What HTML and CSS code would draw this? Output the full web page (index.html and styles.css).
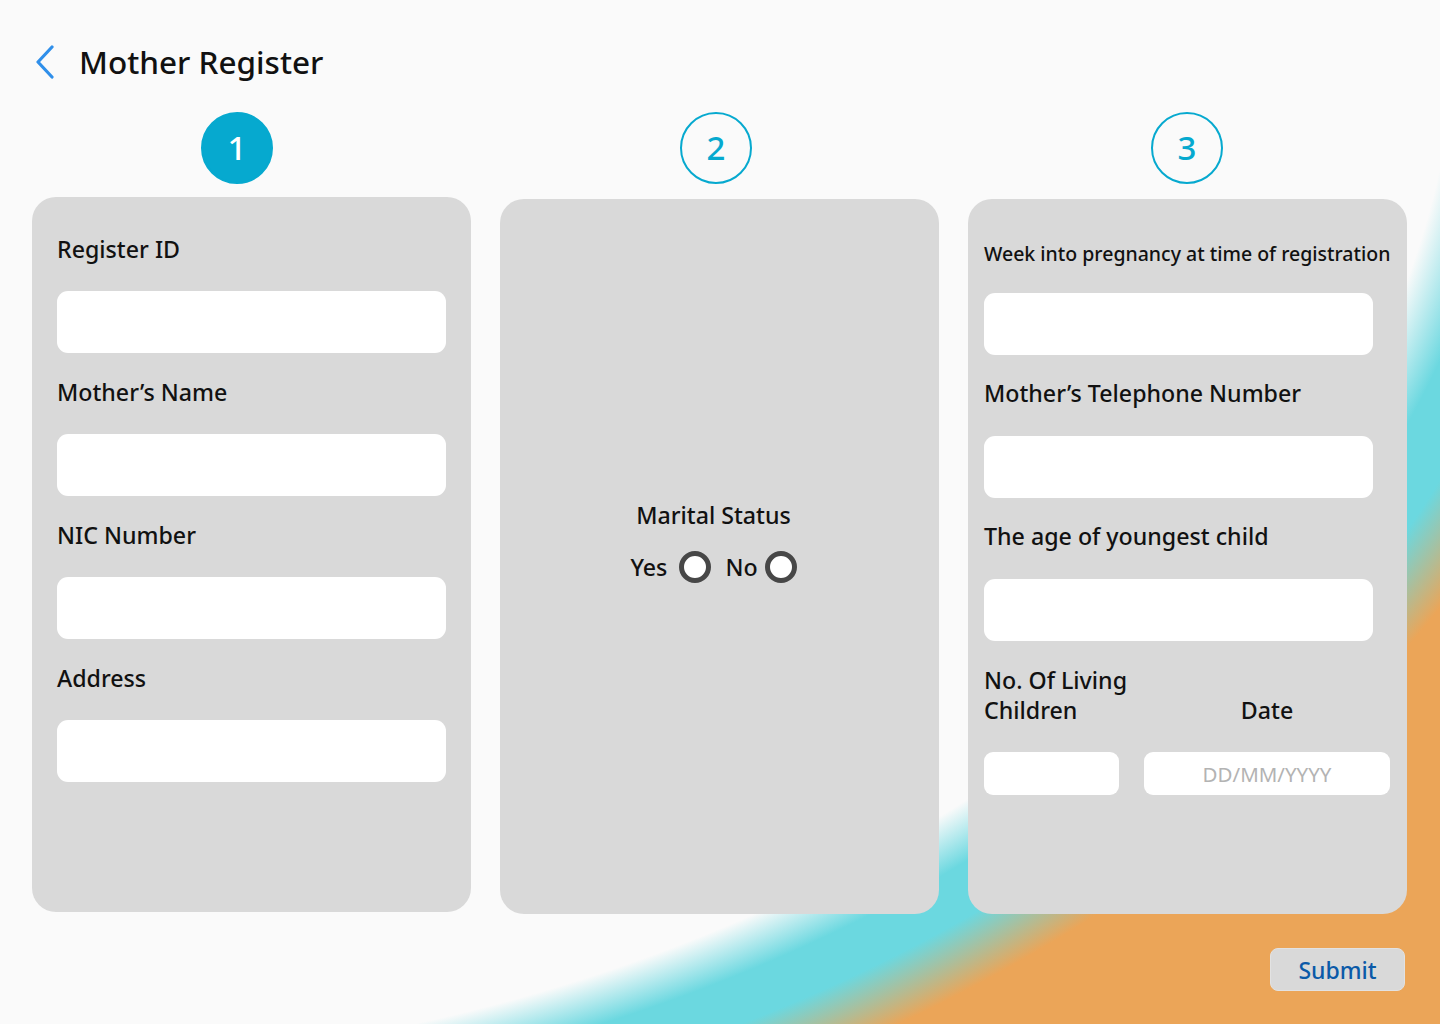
FILE: index.html
```html
<!DOCTYPE html>
<html lang="en">
<head>
<meta charset="utf-8">
<title>Mother Register</title>
<link rel="stylesheet" href="styles.css">
</head>
<body>
<div class="page">
  <header class="header">
    <button class="back" aria-label="Back">
      <svg width="20" height="34" viewBox="0 0 20 34" fill="none"><path d="M17 2 L3 17 L17 32" stroke="#2f8fea" stroke-width="3.2" stroke-linecap="round" stroke-linejoin="round"/></svg>
    </button>
    <h1 class="title">Mother Register</h1>
  </header>

  <main class="columns">
    <section class="column column--one">
      <div class="step step--active">1</div>
      <div class="card card--form">
        <div class="field">
          <label class="label">Register ID</label>
          <div class="input"></div>
        </div>
        <div class="field">
          <label class="label">Mother’s Name</label>
          <div class="input"></div>
        </div>
        <div class="field">
          <label class="label">NIC Number</label>
          <div class="input"></div>
        </div>
        <div class="field">
          <label class="label">Address</label>
          <div class="input"></div>
        </div>
      </div>
    </section>

    <section class="column column--two">
      <div class="step">2</div>
      <div class="card card--center">
        <div class="label label--center">Marital Status</div>
        <div class="radios">
          <span class="radio-text">Yes</span>
          <span class="radio"></span>
          <span class="radio-text radio-text--second">No</span>
          <span class="radio"></span>
        </div>
      </div>
    </section>

    <section class="column column--three">
      <div class="step step--three">3</div>
      <div class="card card--form card--three">
        <div class="field">
          <label class="label label--small">Week into pregnancy at time of registration</label>
          <div class="input"></div>
        </div>
        <div class="field">
          <label class="label label--spaced">Mother’s Telephone Number</label>
          <div class="input"></div>
        </div>
        <div class="field">
          <label class="label label--spaced">The age of youngest child</label>
          <div class="input"></div>
        </div>
        <div class="pair">
          <div class="label label--two">No. Of Living<br>Children</div>
          <div class="label label--date">Date</div>
          <div class="input input--short"></div>
          <div class="input input--short input--date">DD/MM/YYYY</div>
        </div>
      </div>
    </section>
  </main>

  <footer class="footer">
    <button class="submit">Submit</button>
  </footer>
</div>
</body>
</html>
```
FILE: styles.css
```css
* { box-sizing: border-box; }

html, body {
  margin: 0;
  padding: 0;
}

body {
  font-family: "Noto Sans", "Open Sans", sans-serif;
  color: #111111;
  background: #fafafa;
}

.page {
  width: 1440px;
  height: 1024px;
  overflow: hidden;
  background: radial-gradient(ellipse 1495px 1095px at 0 0,
    #fafafa 0px,
    #fafafa 1458px,
    #6bd8e0 1522px,
    #6bd8e0 1582px,
    #eba558 1662px,
    #eba558 3000px);
}

.header {
  display: flex;
  align-items: center;
  height: 46px;
  margin-top: 39px;
  padding-left: 35px;
}

.back {
  display: flex;
  align-items: center;
  justify-content: center;
  width: 20px;
  height: 34px;
  padding: 0;
  border: 0;
  background: none;
  cursor: pointer;
}

.title {
  margin: 0 0 0 24px;
  font-size: 31.5px;
  font-weight: 500;
  line-height: 46px;
  color: #111111;
}

.columns {
  display: grid;
  grid-template-columns: repeat(3, 439px);
  column-gap: 29px;
  padding-left: 32px;
  margin-top: 27px;
}

.column {
  display: flex;
  flex-direction: column;
  align-items: center;
}

.step {
  width: 72px;
  height: 72px;
  border-radius: 50%;
  border: 2px solid #06a9cf;
  color: #06a9cf;
  display: flex;
  align-items: center;
  justify-content: center;
  font-size: 33px;
  font-weight: 500;
  line-height: 1;
  padding-bottom: 1px;
  margin-right: 7px;
}

.step--active {
  background: #06a9cf;
  color: #ffffff;
  margin-right: 29px;
}

.step--three {
  margin-right: 1px;
}

.card {
  width: 439px;
  height: 715px;
  background: #d9d9d9;
  border-radius: 24px;
  margin-top: 15px;
}

.column--one .card {
  margin-top: 13px;
}

.card--form {
  padding: 38px 25px 0 25px;
}

.card--three {
  padding: 41px 17px 0 16px;
}

.field {
  display: flex;
  flex-direction: column;
  margin-bottom: 25px;
}

.card--three .field {
  margin-bottom: 24px;
}

.label {
  display: block;
  font-size: 23.2px;
  font-weight: 500;
  line-height: 28px;
  margin-bottom: 28px;
  white-space: nowrap;
}

.label--small {
  font-size: 19.5px;
  margin-bottom: 25px;
}

.label--spaced {
  margin-bottom: 29px;
}

.input {
  width: 389px;
  height: 62px;
  background: #ffffff;
  border-radius: 11px;
}

.pair {
  display: grid;
  grid-template-columns: 135px 246px;
  column-gap: 25px;
  row-gap: 27px;
}

.label--two {
  line-height: 30px;
  margin: 0;
}

.label--date {
  margin: 0;
  align-self: end;
  text-align: center;
  line-height: 30px;
}

.input--short {
  width: auto;
  height: 43px;
  border-radius: 9px;
}

.input--date {
  display: flex;
  align-items: center;
  justify-content: center;
  color: #b3b3b3;
  font-size: 20.5px;
}

.card--center {
  display: flex;
  flex-direction: column;
  align-items: center;
  justify-content: center;
  padding-bottom: 29px;
  padding-right: 12px;
}

.label--center {
  margin: 0 0 22px 0;
}

.radios {
  display: flex;
  align-items: center;
  height: 32px;
}

.radio-text {
  font-size: 23.2px;
  font-weight: 500;
  line-height: 28px;
  margin-right: 12px;
}

.radio-text--second {
  margin-right: 7px;
}

.radio {
  width: 32px;
  height: 32px;
  border-radius: 50%;
  background: #ffffff;
  border: 5px solid #474747;
  margin-right: 14px;
}

.radio:last-child {
  margin-right: 0;
}

.footer {
  display: flex;
  justify-content: flex-end;
  padding-right: 35px;
  margin-top: 34px;
}

.submit {
  width: 135px;
  height: 43px;
  background: #d9d9d9;
  border: 1px solid #e2e2e2;
  border-radius: 8px;
  color: #0b5aa8;
  font-family: "Noto Sans", "Open Sans", sans-serif;
  font-size: 23px;
  font-weight: 500;
  padding: 0;
  cursor: pointer;
}
```
